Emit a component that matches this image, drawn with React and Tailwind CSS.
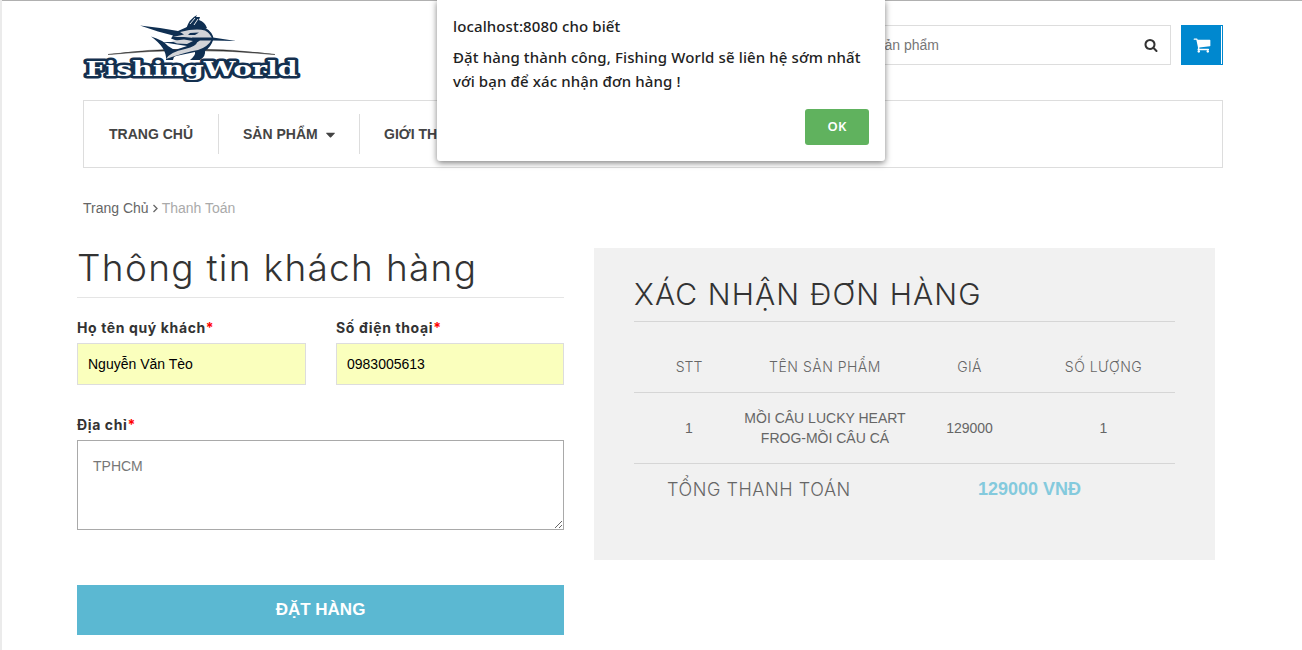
import { FaCaretDown } from "react-icons/fa";

const arial = "font-['Liberation_Sans',Arial,sans-serif]";
const geo = "font-['Inter',sans-serif]";

function SearchIcon() {
  return (
    <svg width="14" height="14" viewBox="0 0 1792 1792" fill="#333">
      <path d="M1216 832q0-185-131.5-316.5t-316.5-131.5-316.5 131.5-131.5 316.5 131.5 316.5 316.5 131.5 316.5-131.5 131.5-316.5zm512 832q0 52-38 90t-90 38q-54 0-90-38l-343-342q-179 124-399 124-143 0-273.5-55.5t-225-150-150-225-55.5-273.5 55.5-273.5 150-225 225-150 273.5-55.5 273.5 55.5 225 150 150 225 55.5 273.5q0 220-124 399l343 343q37 37 37 90z" />
    </svg>
  );
}

function CartIcon() {
  return (
    <svg width="18" height="18" viewBox="0 0 1792 1792" fill="#fff">
      <path d="M704 1536q0 52-38 90t-90 38-90-38-38-90 38-90 90-38 90 38 38 90zm896 0q0 52-38 90t-90 38-90-38-38-90 38-90 90-38 90 38 38 90zm128-1088v512q0 24-16.5 42.5t-40.5 21.5l-1044 122q13 60 13 70 0 16-24 64h920q26 0 45 19t19 45-19 45-45 19h-1024q-26 0-45-19t-19-45q0-11 8-31.5t16-36 21.5-40 15.5-29.5l-177-823h-204q-26 0-45-19t-19-45 19-45 45-19h256q16 0 28.5 6.500t19.500 15.500 13 24.500 8 26 5.500 29.500 4.500 26h1201q26 0 45 19t19 45z" />
    </svg>
  );
}

function Logo() {
  return (
    <svg className="block" width="220" height="70" viewBox="82 12 220 70">
      <path d="M108 54.500Q190 43.500 275 54.500Q190 46.500 108 54.500Z" fill="#333" stroke="#333" strokeWidth=".5" />
      {/* tail and dorsal fin */}
      <path d="M151 36.500Q163 40 168 46Q172 49 176 50L173 60H166Q167 48 151 36.500Z" fill="#0f2f52" />
      <path d="M186 29Q189 19 197 15L196 17L200 17L199 20Q205 22 207 28L196 31Z" fill="#0f2f52" />
      {/* upper bill and back */}
      <path d="M140 25.500L160 28L178 31L187 27L204 27Q213 32 213.500 39Q211 47 205 51Q206 56 200 60H190Q196 55 195 52L176 56L168 60Q169 53 178 49L187 46L174 44L161 42L180 42L171 38.500L173 35.500L158 31.500Z" fill="#0f2f52" />
      {/* silver flank */}
      <path d="M180 32Q196 28 205 30.500Q211 34 212 39Q208 47 198 50Q186 52 166 59Q170 52 185 49Q197 46 197 42L200 39L194 38L184 37L173 37L184 34.500Z" fill="#d2d4d8" />
      <path d="M171 41L184 39.500L193 41L187 44L177 43.500Z" fill="#d2d4d8" />
      <path d="M190 24L195 18M194 25L198 19" stroke="#fff" strokeWidth=".9" />
      <path d="M190 33L199 32.500L195 35L188 35Z" fill="#0f2f52" />
      <path d="M192 37.500L213 37.500L236 41L212 40.500L200 40.500L196 43Z" fill="#0f2f52" />
      <text x="85.500" y="75.500" textLength="212" lengthAdjust="spacingAndGlyphs" fontFamily="DejaVu Serif, serif" fontWeight="700" fontSize="20.500" fill="#fff" stroke="#14304f" strokeWidth="5" strokeLinejoin="round" paintOrder="stroke">FishingWorld</text>
    </svg>
  );
}

function FieldLabel({ children }) {
  return (
    <label className={`${geo} block h-5 text-[14px] leading-5 font-bold tracking-[0.62px] text-[#333] whitespace-nowrap`}>
      {children}<span className="tracking-normal text-[#f00]">*</span>
    </label>
  );
}

function Field({ label, value, className }) {
  return (
    <div className={className}>
      <FieldLabel>{label}</FieldLabel>
      <div className="mt-[5px] flex h-[42px] items-center border border-[#ddd] bg-[#faffbd] px-2.5 text-[14px] text-black">{value}</div>
    </div>
  );
}

export default function App() {
  return (
    <div className={`${arial} relative h-[650px] w-[1302px] overflow-hidden border-l-2 border-[#ebebeb] bg-white`}>
      <div className="h-px bg-[#b0b0b0]" />
      <header className="ml-[81px] w-[1140px]">
        <div className="flex h-[99px] justify-between">
          <div className="-ml-px pt-[11px]"><Logo /></div>
          <div className="flex gap-2.5 pt-6">
            <div className="flex h-10 w-[400px] items-center justify-between border border-[#ddd] pr-3 pl-11 text-[14px] text-[#777]">
              <span>Tìm kiếm sản phẩm</span>
              <SearchIcon />
            </div>
            <div className="flex h-10 w-[42px] border border-[#0088cf] bg-[#0088cf]">
              <div className="flex flex-1 items-center justify-center border-r border-white">
                <CartIcon />
              </div>
            </div>
          </div>
        </div>
        <nav className="flex h-[68px] items-center border border-[#ddd] text-[14px] font-bold text-[#444]">
          <div className="flex h-10 w-[135px] items-center border-r border-[#ddd] pl-[25px]">TRANG CHỦ</div>
          <div className="flex h-10 w-[141px] items-center gap-[5px] border-r border-[#ddd] pl-6">SẢN PHẨM <FaCaretDown size={15} /></div>
          <div className="pl-6">GIỚI THIỆU</div>
        </nav>
        <div className="mt-[30px] flex h-5 items-center gap-[3px] text-[14px] text-[#666]">
          <span>Trang Chủ</span>
          <svg width="7" height="9" viewBox="0 0 7 9" fill="none" stroke="#666" strokeWidth="1.3"><path d="M1.500 1L5 4.500L1.500 8" /></svg>
          <span className="text-[#aaa]">Thanh Toán</span>
        </div>
      </header>

      <main className="mt-[30px] ml-[75px] flex items-start gap-[30px]">
        <form className="w-[487px]">
          <h1 className={`${geo} h-[50px] border-b border-[#e5e5e5] text-[37px] leading-[39px] font-light tracking-[1.3px] text-[#333] whitespace-nowrap`}>Thông tin khách hàng</h1>
          <div className="mt-5 flex gap-[30px]">
            <Field label="Họ tên quý khách" value="Nguyễn Văn Tèo" className="w-[229px]" />
            <Field label="Số điện thoại" value="0983005613" className="w-[228px]" />
          </div>
          <div className="mt-[30px]"><FieldLabel>Địa chỉ</FieldLabel></div>
          <textarea className="mt-[5px] block h-[90px] w-full resize-y border border-[#a9a9a9] px-[15px] py-[15px] text-[14px] leading-5 text-[#777]" defaultValue="TPHCM" />
          <button type="button" className="mt-[55px] flex h-[50px] w-full items-center justify-center bg-[#5bb8d2] text-[17px] font-bold text-white">ĐẶT HÀNG</button>
        </form>

        <section className="h-[312px] w-[621px] bg-[#f1f1f1] px-10 pt-[26px]">
          <h2 className={`${geo} h-[48px] border-b border-[#d6d6d6] text-[30px] leading-[41px] font-light tracking-[1.1px] text-[#333] whitespace-nowrap`}>XÁC NHẬN ĐƠN HÀNG</h2>
          <div className={`${geo} mt-[19px] grid h-[52px] grid-cols-[110px_162px_127px_141px] items-center border-b border-[#d6d6d6] text-center text-[14px] font-light text-[#666] whitespace-nowrap`}>
            <span>STT</span><span className="tracking-[0.5px]">TÊN SẢN PHẨM</span><span className="tracking-[0.4px]">GIÁ</span><span className="tracking-[0.5px]">SỐ LƯỢNG</span>
          </div>
          <div className="grid h-[71px] grid-cols-[110px_162px_127px_141px] items-center border-b border-[#d6d6d6] text-center text-[14px] leading-5 text-[#666] whitespace-nowrap">
            <span>1</span><span>MỒI CÂU LUCKY HEART<br />FROG-MỒI CÂU CÁ</span><span>129000</span><span>1</span>
          </div>
          <div className="flex h-[50px] items-center pl-[33px] text-[18px] whitespace-nowrap">
            <span className={`${geo} w-[311px] font-light tracking-[0.56px] text-[#666]`}>TỔNG THANH TOÁN</span>
            <span className="font-bold text-[#84cadd]">129000 VNĐ</span>
          </div>
        </section>
      </main>

      <div role="dialog" className="absolute top-0 left-[435px] h-[161px] w-[448px] rounded-b-[3px] bg-white px-4 pt-[14px] font-['Noto_Sans',sans-serif] text-[15px] font-medium tracking-[0.12px] text-[#222] shadow-[0_2px_6px_rgba(0,0,0,0.5)]">
        <div className="h-6 leading-6 whitespace-nowrap">localhost:8080 cho biết</div>
        <p className="mt-[7px] leading-6 whitespace-nowrap">Đặt hàng thành công, Fishing World sẽ liên hệ sớm nhất<br />với bạn để xác nhận đơn hàng !</p>
        <button type="button" className="mt-4 ml-auto flex h-9 w-16 items-center justify-center rounded-[3px] bg-[#60b25e] text-[13px] font-semibold text-white">OK</button>
      </div>
    </div>
  );
}
